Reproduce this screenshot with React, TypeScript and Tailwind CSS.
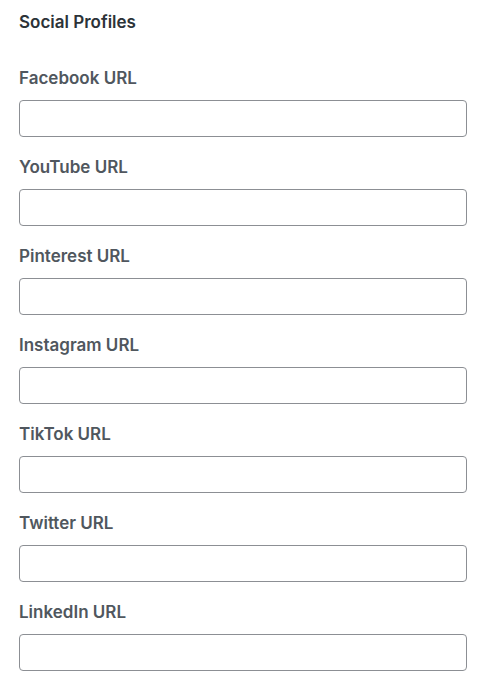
const FIELDS = [
  "Facebook URL",
  "YouTube URL",
  "Pinterest URL",
  "Instagram URL",
  "TikTok URL",
  "Twitter URL",
  "LinkedIn URL",
];

export default function App() {
  return (
    <div className="min-h-screen bg-white pl-[19px] pr-[16px] pt-[11px] font-['Inter','Liberation_Sans',sans-serif]">
      <h2 className="text-[17px] leading-[22px] font-semibold text-[#2c3338] mb-[33px]">
        Social Profiles
      </h2>

      {FIELDS.map((label) => (
        <div key={label} className="mb-[18px]">
          <label className="block text-[17px] leading-[24px] font-semibold text-[#50575e] mb-[10px]">
            {label}
          </label>
          <input
            type="text"
            className="block w-[448px] h-[37px] rounded-[4px] border border-[#8c8f94] bg-white px-2 text-sm outline-none"
          />
        </div>
      ))}
    </div>
  );
}
